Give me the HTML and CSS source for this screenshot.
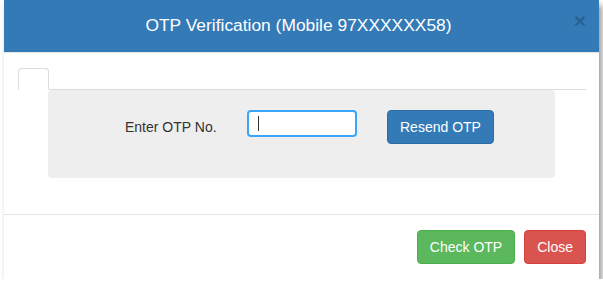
FILE: index.html
```html
<!DOCTYPE html>
<html lang="en">
<head>
<meta charset="utf-8">
<title>OTP Verification</title>
<link rel="stylesheet" href="styles.css">
</head>
<body>
<div class="modal">
  <div class="modal-header">
    <h4 class="modal-title">OTP Verification (Mobile 97XXXXXX58)</h4>
    <button class="close" type="button">&times;</button>
  </div>
  <div class="modal-body">
    <ul class="nav-tabs"><li class="tab"></li></ul>
    <div class="well">
      <label class="otp-label">Enter OTP No.</label>
      <div class="otp-input"><span class="caret"></span></div>
      <button class="btn btn-primary resend" type="button">Resend OTP</button>
    </div>
  </div>
  <div class="modal-footer">
    <button class="btn btn-success" type="button">Check OTP</button>
    <button class="btn btn-danger" type="button">Close</button>
  </div>
</div>
</body>
</html>
```
FILE: styles.css
```css
html, body {
  margin: 0;
  padding: 0;
  background: #fff;
}
body {
  font-family: "Liberation Sans", Arial, Helvetica, sans-serif;
  font-size: 14px;
  color: #333;
}
.modal {
  margin-left: 4px;
  width: 595px;
  background: #fff;
  box-shadow: 3px 5px 6px rgba(0, 0, 0, 0.4);
}
.modal-header {
  position: relative;
  height: 52px;
  background: #337ab7;
  border-bottom: 1px solid #e5e5e5;
}
.modal-title {
  margin: 0;
  padding-right: 6px;
  text-align: center;
  color: #fff;
  font-size: 17.4px;
  font-weight: normal;
  line-height: 50px;
}
.close {
  position: absolute;
  right: 13px;
  top: 10px;
  padding: 0;
  border: 0;
  background: none;
  font-family: "Liberation Sans", Arial, sans-serif;
  font-size: 21px;
  font-weight: bold;
  line-height: 1;
  color: #000;
  opacity: 0.2;
}
.modal-body {
  padding: 15px 13px 36px 14px;
}
.nav-tabs {
  list-style: none;
  margin: 0;
  padding: 0;
  height: 21px;
  border-bottom: 1px solid #ddd;
  display: flex;
}
.tab {
  box-sizing: border-box;
  width: 31px;
  height: 22px;
  border: 1px solid #ddd;
  border-bottom-color: transparent;
  border-radius: 4px 4px 0 0;
  background: #fff;
}
.well {
  box-sizing: border-box;
  margin-left: 30px;
  width: 507px;
  height: 88px;
  padding-top: 20px;
  background: #eee;
  border-radius: 4px;
  display: flex;
  align-items: flex-start;
}
.otp-label {
  flex: 0 0 122px;
  margin-left: 77px;
  padding-top: 7px;
  line-height: 20px;
  font-size: 14px;
  color: #333;
}
.otp-input {
  box-sizing: border-box;
  width: 110px;
  height: 27px;
  border: 2px solid #3ba6f9;
  border-radius: 4px;
  background: #fff;
  display: flex;
  align-items: center;
  padding-left: 9px;
}
.caret {
  width: 1px;
  height: 15px;
  background: #333;
}
.btn {
  font-family: inherit;
  font-size: 14px;
  line-height: 20px;
  padding: 6px 12px;
  border: 1px solid transparent;
  border-radius: 4px;
  color: #fff;
  cursor: pointer;
}
.resend {
  margin-left: 30px;
}
.btn-primary {
  background: #337ab7;
  border-color: #2e6da4;
}
.btn-success {
  background: #5cb85c;
  border-color: #4cae4c;
}
.btn-danger {
  background: #d9534f;
  border-color: #d43f3a;
}
.modal-footer {
  border-top: 1px solid #e5e5e5;
  padding: 15px 13px 15px 15px;
  display: flex;
  justify-content: flex-end;
  gap: 9px;
}
```
